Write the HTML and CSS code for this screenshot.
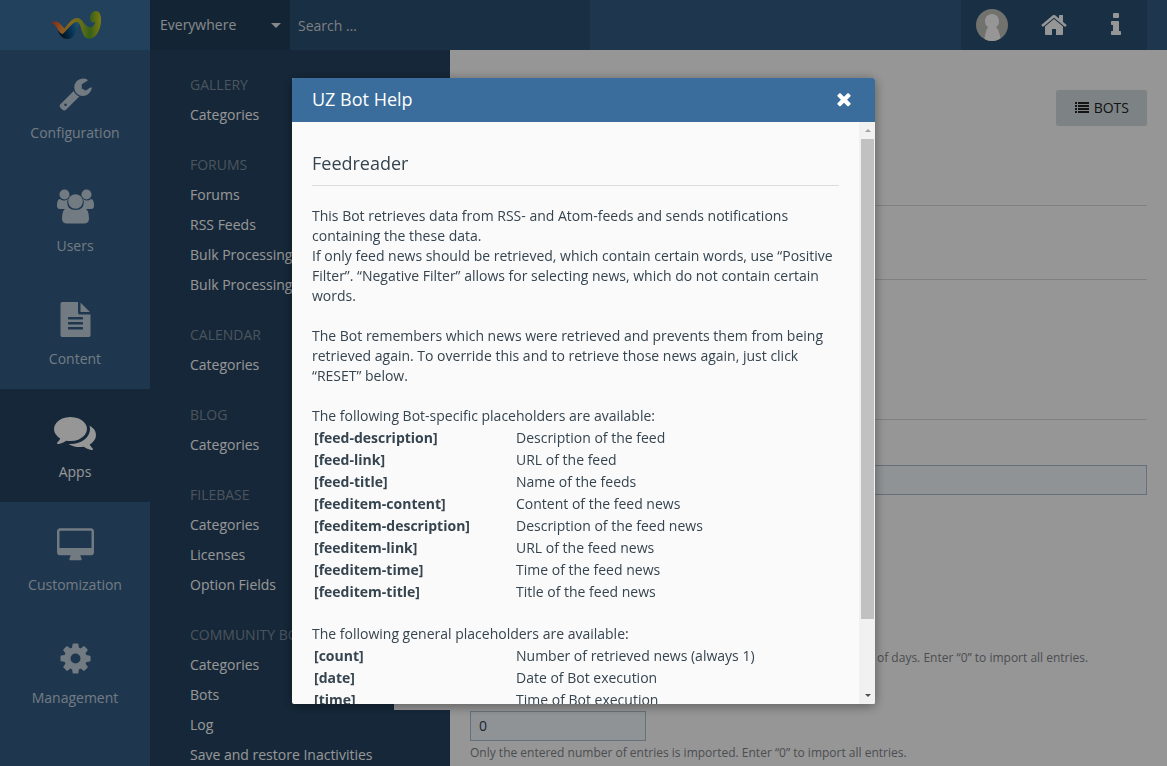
FILE: index.html
```html
<!DOCTYPE html>
<html lang="en">
<head>
<meta charset="utf-8">
<title>UZ Bot Help</title>
<link rel="stylesheet" href="styles.css">
</head>
<body>
<div class="page">
  <header class="topbar">
    <a class="logo" href="#" aria-label="Home">
      <svg width="52" height="30" viewBox="0 0 52 30">
        <defs>
          <linearGradient id="orange" x1="0" y1="0" x2="1" y2="0.3"><stop offset="0" stop-color="#e0401c"/><stop offset="0.5" stop-color="#e8702c"/><stop offset="1" stop-color="#e8a040"/></linearGradient>
          <linearGradient id="blue" x1="0" y1="0.3" x2="1" y2="0"><stop offset="0" stop-color="#06182a"/><stop offset="0.5" stop-color="#0c5a94"/><stop offset="1" stop-color="#4a9cc4"/></linearGradient>
          <linearGradient id="green" x1="0" y1="0.3" x2="1" y2="0.3"><stop offset="0" stop-color="#e09038"/><stop offset="0.25" stop-color="#d8b030"/><stop offset="0.5" stop-color="#a4b824"/><stop offset="0.72" stop-color="#58a02c"/><stop offset="1" stop-color="#d2ce18"/></linearGradient>
        </defs>
        <path fill="url(#blue)" d="M6 19C9 26 12 29 17 29C22 29 24 24 27 17C28 14 29 12 29 11L24 9C19 13 16 20 12 23C9 24 8 22 6 19Z"/>
        <path fill="url(#orange)" d="M0.500 12.500C4 10 9 12 12 17L15 20C14 22 12 24 11 24C7 22 6 15 0.500 12.500Z"/>
        <path fill="url(#green)" d="M13 19C18 13 21 8 26 8C32 8 33 16 38 17C41 18 44 15 44 12C39 14 38 8 40 4C42 0 48 0 49 4C51 9 50 18 46 24C43 29 37 30 34 27C30 23 30 12 26 12C21 12 17 20 11 24Z"/>
      </svg>
    </a>
    <form class="search">
      <button class="scope" type="button">Everywhere <span class="caret"></span></button>
      <input class="search-input" type="text" placeholder="Search …" aria-label="Search">
    </form>
    <nav class="user-panel" aria-label="User">
      <a class="panel-item" href="#" aria-label="Profile">
        <svg width="32" height="32" viewBox="0 0 32 32"><defs><clipPath id="round"><circle cx="16" cy="16" r="16"/></clipPath></defs><g clip-path="url(#round)"><path fill="#bdbcb8" d="M0 0h32v32H0z"/><path fill="#fafafa" d="M16 5c4 0 7 3 7 7 0 3-1 5-3 6 3 3 4 8 5 14H8c1-6 2-11 4-14-2-1-3-3-3-6 0-4 3-7 7-7z"/></g></svg>
      </a>
      <a class="panel-item" href="#" aria-label="Home page">
        <svg width="28" height="28" viewBox="0 0 1792 1792"><path d="M1472 992v480q0 26-19 45t-45 19h-384v-384h-256v384h-384q-26 0-45-19t-19-45v-480q0-1 .5-3t.5-3l575-474 575 474q1 2 1 6zm223-69l-62 74q-8 9-21 11h-3q-13 0-21-7l-692-577-692 577q-12 8-24 7-13-2-21-11l-62-74q-8-10-7-23.5t11-21.5l719-599q32-26 76-26t76 26l244 204v-195q0-14 9-23t23-9h192q14 0 23 9t9 23v408l219 182q10 8 11 21.5t-7 23.5z"/></svg>
      </a>
      <a class="panel-item" href="#" aria-label="Information">
        <svg width="28" height="28" viewBox="0 0 1792 1792"><path d="M1216 1344v128q0 26-19 45t-45 19h-512q-26 0-45-19t-19-45v-128q0-26 19-45t45-19h64v-384h-64q-26 0-45-19t-19-45v-128q0-26 19-45t45-19h384q26 0 45 19t19 45v576h64q26 0 45 19t19 45zm-128-1152v192q0 26-19 45t-45 19h-256q-26 0-45-19t-19-45v-192q0-26 19-45t45-19h256q26 0 45 19t19 45z"/></svg>
      </a>
    </nav>
  </header>

  <div class="columns">
    <nav class="main-menu" aria-label="Main">
      <a class="menu-item" href="#">
        <span class="menu-icon"><svg width="35" height="35" viewBox="0 0 1792 1792"><path d="M448 1472q0-26-19-45t-45-19-45 19-19 45 19 45 45 19 45-19 19-45zm644-420l-682 682q-37 37-90 37-52 0-91-37l-106-108q-38-36-38-90 0-53 38-91l681-681q39 98 114.500 173.500t173.500 114.500zm634-435q0 39-23 106-47 134-164.500 217.500t-258.500 83.500q-185 0-316.500-131.500t-131.500-316.500 131.500-316.500 316.500-131.500q58 0 121.500 16.500t107.500 46.500q16 11 16 28t-16 28l-293 169v224l193 107q5-3 79-48.500t135.500-81 70.500-35.500q15 0 23.500 10t8.500 25z"/></svg></span>
        Configuration</a>
      <a class="menu-item" href="#">
        <span class="menu-icon"><svg width="37" height="35" viewBox="0 0 37 35"><circle cx="7.500" cy="5.500" r="5"/><circle cx="29.500" cy="5.500" r="5"/><path d="M3 10q4 3 8 0q-2 6 2 10H3q-3 0-3-3q0-7 3-7zM34 10q-4 3-8 0q2 6-2 10h10q3 0 3-3q0-7-3-7z"/><g class="cutout"><circle cx="18.500" cy="12.500" r="8"/></g><circle cx="18.500" cy="12.500" r="7.300"/><path d="M11 18.500q7.500 5 15 0q6 1 6 11q0 5-5 5H10q-5 0-5-5q0-10 6-11z"/></svg></span>
        Users</a>
      <a class="menu-item" href="#">
        <span class="menu-icon"><svg width="35" height="35" viewBox="0 0 1792 1792"><path d="M1596 476q14 14 28 36h-472v-472q22 14 36 28zm-476 164h544v1056q0 40-28 68t-68 28h-1344q-40 0-68-28t-28-68v-1600q0-40 28-68t68-28h800v544q0 40 28 68t68 28zm160 736v-64q0-14-9-23t-23-9h-704q-14 0-23 9t-9 23v64q0 14 9 23t23 9h704q14 0 23-9t9-23zm0-256v-64q0-14-9-23t-23-9h-704q-14 0-23 9t-9 23v64q0 14 9 23t23 9h704q14 0 23-9t9-23zm0-256v-64q0-14-9-23t-23-9h-704q-14 0-23 9t-9 23v64q0 14 9 23t23 9h704q14 0 23-9t9-23z"/></svg></span>
        Content</a>
      <a class="menu-item active" href="#" aria-current="page">
        <span class="menu-icon"><svg width="42" height="42" viewBox="0 0 1792 1792"><path d="M1408 768q0 139-94 257t-256.500 186.500-353.500 68.500q-86 0-176-16-124 88-278 128-36 9-86 16h-3q-11 0-20.500-8t-11.500-21q-1-3-1-6.500t.5-6.500 2-6l2.500-5 3.500-5.500 4-5 4.500-5 4-4.500q5-6 23-25t26-29.500 22.500-29 25-38.500 20.500-44q-124-72-195-177t-71-224q0-139 94-257t256.500-186.500 353.500-68.500 353.500 68.500 256.500 186.500 94 257zm384 256q0 120-71 224.500t-195 176.500q10 24 20.500 44t25 38.500 22.500 29 26 29.500 23 25q1 1 4 4.500t4.500 5 4 5 3.500 5.500l2.500 5 2 6 .5 6.500-1 6.500q-3 14-13 22t-22 7q-50-7-86-16-154-40-278-128-90 16-176 16-271 0-472-132 58 4 88 4 161 0 309-45t264-129q125-92 192-212t67-254q0-77-23-152 129 71 204 178t75 230z"/></svg></span>
        Apps</a>
      <a class="menu-item" href="#">
        <span class="menu-icon"><svg width="37" height="35" viewBox="-64 0 1920 1792"><path d="M1728 992v-832q0-13-9.500-22.500t-22.500-9.500h-1600q-13 0-22.500 9.500t-9.500 22.500v832q0 13 9.500 22.500t22.500 9.500h1600q13 0 22.500-9.500t9.500-22.500zm128-832v1088q0 66-47 113t-113 47h-544q0 37 16 77.500t32 71 16 43.500q0 26-19 45t-45 19h-512q-26 0-45-19t-19-45q0-14 16-44t32-70 16-78h-544q-66 0-113-47t-47-113v-1088q0-66 47-113t113-47h1600q66 0 113 47t47 113z"/></svg></span>
        Customization</a>
      <a class="menu-item" href="#">
        <span class="menu-icon"><svg width="35" height="35" viewBox="0 0 1792 1792"><path d="M1152 896q0-106-75-181t-181-75-181 75-75 181 75 181 181 75 181-75 75-181zm512-109v222q0 12-8 23t-20 13l-185 28q-19 54-39 91 35 50 107 138 10 12 10 25t-9 23q-27 37-99 108t-94 71q-12 0-26-9l-138-108q-44 23-91 38-16 136-29 186-7 28-36 28h-222q-14 0-24.500-8.500t-11.500-21.500l-28-184q-49-16-90-37l-141 107q-10 9-25 9-14 0-25-11-126-114-165-168-7-10-7-23 0-12 8-23 15-21 51-66.500t54-70.500q-27-50-41-99l-183-27q-13-2-21-12.500t-8-23.500v-222q0-12 8-23t19-13l186-28q14-46 39-92-40-57-107-138-10-12-10-24 0-10 9-23 26-36 98.500-107.500t94.500-71.500q13 0 26 10l138 107q44-23 91-38 16-136 29-186 7-28 36-28h222q14 0 24.500 8.500t11.500 21.500l28 184q49 16 90 37l142-107q9-9 24-9 13 0 25 10 129 119 165 170 7 8 7 22 0 12-8 23-15 21-51 66.500t-54 70.500q26 50 41 98l183 28q13 2 21 12.500t8 23.500z"/></svg></span>
        Management</a>
    </nav>

    <nav class="sub-menu" aria-label="Apps">
      <section class="group"><h2 class="group-title">Gallery</h2><a class="sub-link" href="#">Categories</a></section>
      <section class="group"><h2 class="group-title">Forums</h2><a class="sub-link" href="#">Forums</a><a class="sub-link" href="#">RSS Feeds</a><a class="sub-link" href="#">Bulk Processing</a><a class="sub-link" href="#">Bulk Processing</a></section>
      <section class="group"><h2 class="group-title">Calendar</h2><a class="sub-link" href="#">Categories</a></section>
      <section class="group"><h2 class="group-title">Blog</h2><a class="sub-link" href="#">Categories</a></section>
      <section class="group"><h2 class="group-title">Filebase</h2><a class="sub-link" href="#">Categories</a><a class="sub-link" href="#">Licenses</a><a class="sub-link" href="#">Option Fields</a></section>
      <section class="group"><h2 class="group-title">Community Bot</h2><a class="sub-link" href="#">Categories</a><a class="sub-link" href="#">Bots</a><a class="sub-link" href="#">Log</a><a class="sub-link" href="#">Save and restore Inactivities</a></section>
      <span class="sub-menu-gap"></span>
    </nav>

    <main class="content">
      <div class="content-head">
        <a class="button" href="#"><svg width="14" height="12" viewBox="0 0 14 12"><path d="M0 0h2v2H0zM3 0h11v2H3zM0 3h2v2H0zM3 3h11v2H3zM0 6h2v2H0zM3 6h11v2H3zM0 9h2v2H0zM3 9h11v2H3z"/></svg>BOTS</a>
      </div>
      <hr class="rule rule-top">
      <hr class="rule rule-middle">
      <hr class="rule rule-bottom">
      <form class="settings">
        <input class="field" type="text" aria-label="Feed address">
        <p class="hint hint-days">of days. Enter “0” to import all entries.</p>
        <input class="field field-short" type="text" value="0" aria-label="Number of entries">
        <p class="hint">Only the entered number of entries is imported. Enter “0” to import all entries.</p>
      </form>
    </main>
  </div>
</div>

<div class="overlay">
  <section class="dialog" role="dialog" aria-modal="true" aria-labelledby="dialog-title">
    <header class="dialog-head">
      <h1 class="dialog-title" id="dialog-title">UZ Bot Help</h1>
      <button class="close" type="button" aria-label="Close"><svg width="20" height="20" viewBox="0 0 1792 1792"><path d="M1490 1322q0 40-28 68l-136 136q-28 28-68 28t-68-28l-294-294-294 294q-28 28-68 28t-68-28l-136-136q-28-28-28-68t28-68l294-294-294-294q-28-28-28-68t28-68l136-136q28-28 68-28t68 28l294 294 294-294q28-28 68-28t68 28l136 136q28 28 28 68t-28 68l-294 294 294 294q28 28 28 68z"/></svg></button>
    </header>
    <div class="dialog-body">
      <div class="dialog-content">
        <h2 class="section-title">Feedreader</h2>
        <p class="text">This Bot retrieves data from RSS- and Atom-feeds and sends notifications containing the these data.<br>If only feed news should be retrieved, which contain certain words, use “Positive Filter”. “Negative Filter” allows for selecting news, which do not contain certain words.</p>
        <p class="text">The Bot remembers which news were retrieved and prevents them from being retrieved again. To override this and to retrieve those news again, just click “RESET” below.</p>
        <p class="lead">The following Bot-specific placeholders are available:</p>
        <table class="placeholders">
          <tr><th scope="row">[feed-description]</th><td>Description of the feed</td></tr>
          <tr><th scope="row">[feed-link]</th><td>URL of the feed</td></tr>
          <tr><th scope="row">[feed-title]</th><td>Name of the feeds</td></tr>
          <tr><th scope="row">[feeditem-content]</th><td>Content of the feed news</td></tr>
          <tr><th scope="row">[feeditem-description]</th><td>Description of the feed news</td></tr>
          <tr><th scope="row">[feeditem-link]</th><td>URL of the feed news</td></tr>
          <tr><th scope="row">[feeditem-time]</th><td>Time of the feed news</td></tr>
          <tr><th scope="row">[feeditem-title]</th><td>Title of the feed news</td></tr>
        </table>
        <p class="lead">The following general placeholders are available:</p>
        <table class="placeholders">
          <tr><th scope="row">[count]</th><td>Number of retrieved news (always 1)</td></tr>
          <tr><th scope="row">[date]</th><td>Date of Bot execution</td></tr>
          <tr><th scope="row">[time]</th><td>Time of Bot execution</td></tr>
        </table>
      </div>
      <div class="scrollbar" aria-hidden="true">
        <span class="arrow arrow-up"></span>
        <span class="thumb"></span>
        <span class="arrow arrow-down"></span>
      </div>
    </div>
  </section>
</div>
</body>
</html>
```
FILE: styles.css
```css
* { box-sizing: border-box; }

body {
  margin: 0;
  background: #fafafa;
  color: #35444f;
  font: 14px/20px "Open Sans", "Noto Sans", sans-serif;
}

h1, h2, p { margin: 0; }
a { color: inherit; text-decoration: none; }
svg { display: block; fill: currentColor; }

.page {
  display: flex;
  flex-direction: column;
  height: 100vh;
  overflow: hidden;
}

/* Top bar */
.topbar {
  display: flex;
  flex: none;
  height: 50px;
  padding-right: 20px;
  background: #325c84;
}
.logo {
  display: flex;
  align-items: center;
  justify-content: center;
  width: 150px;
  padding-left: 3px;
  background: #3a6d9c;
}
.search { display: flex; width: 440px; }
.scope {
  display: flex;
  align-items: center;
  justify-content: space-between;
  width: 140px;
  padding: 0 9px 0 10px;
  border: 0;
  background: #213d57;
  color: #e0e4e8;
  font: inherit;
}
.caret {
  border: 5px solid transparent;
  border-top-color: currentColor;
  border-bottom: 0;
}
.search-input {
  flex: 1;
  min-width: 0;
  padding: 2px 8px 0;
  border: 0;
  background: #2b4f71;
  color: #fafafa;
  font: inherit;
}
.search-input::placeholder { color: #d0d4d8; opacity: 1; }
.user-panel {
  display: flex;
  margin-left: auto;
  background: #2b4f71;
  color: #fafafa;
}
.panel-item {
  display: flex;
  align-items: center;
  justify-content: center;
  width: 62px;
}

/* Menus */
.columns { display: flex; flex: 1; min-height: 0; }
.main-menu { width: 150px; background: #325c84; }
.menu-item {
  display: flex;
  flex-direction: column;
  align-items: center;
  gap: 9px;
  padding: 22px 0 20px;
  color: #c0cdd9;
}
.menu-item.active { background: #24425f; color: #fafafa; }
.menu-icon { display: flex; align-items: center; height: 42px; }
.cutout { fill: #325c84; }

.sub-menu {
  position: relative;
  width: 300px;
  padding: 20px 40px;
  overflow: hidden;
  background: #24425f;
}
.group { margin-bottom: 20px; }
.group-title {
  color: #7e8d9b;
  font-size: 14px;
  font-weight: 400;
  line-height: 30px;
  text-transform: uppercase;
}
.sub-link { display: block; color: #fafafa; line-height: 30px; }
.sub-menu-gap {
  position: absolute;
  right: 0;
  bottom: 56px;
  width: 56px;
  height: 20px;
  background: #fafafa;
}

/* Page content */
.content { flex: 1; padding: 40px 20px 0; }
.content-head { display: flex; justify-content: flex-end; }
.button {
  display: flex;
  align-items: center;
  gap: 5px;
  padding: 8px 18px 8px 19px;
  border-radius: 2px;
  background: #d0dade;
  color: #222;
}
.rule { height: 1px; margin: 0; border: 0; background: #d6d6d6; }
.rule-top { margin-top: 79px; }
.rule-middle { margin-top: 73px; }
.rule-bottom { margin-top: 139px; }
.settings { padding-top: 45px; }
.field {
  display: block;
  width: 100%;
  height: 30px;
  padding: 0 8px 2px;
  border: 1px solid #a9bdcd;
  background: #eff6fb;
  color: #2c3e50;
  font: inherit;
}
.field-short { width: 176px; margin-top: 43px; }
.hint { padding-top: 2px; color: #7d8287; font-size: 12px; }
.hint-days { margin-top: 151px; padding-left: 407px; }

/* Dialog */
.overlay {
  position: fixed;
  inset: 0;
  padding: 78px 20px 62px;
  background: rgba(0, 0, 0, .4);
}
.dialog {
  display: flex;
  flex-direction: column;
  max-width: 583px;
  height: 100%;
  margin: 0 auto;
  overflow: hidden;
  border-radius: 2px;
  background: #fafafa;
  box-shadow: 0 2px 12px rgba(0, 0, 0, .4);
}
.dialog-head {
  display: flex;
  flex: none;
  align-items: center;
  justify-content: space-between;
  height: 44px;
  padding: 0 21px 2px 20px;
  background: #3a6d9c;
  color: #fff;
}
.dialog-title { font-size: 18px; font-weight: 400; line-height: 24px; }
.close { padding: 0; border: 0; background: none; color: inherit; }
.dialog-body { display: flex; flex: 1; min-height: 0; }
.dialog-content { flex: 1; padding: 28px 20px 0; overflow: hidden; }
.section-title {
  margin-bottom: 20px;
  padding-bottom: 8px;
  border-bottom: 1px solid #dcdcdc;
  font-size: 18px;
  font-weight: 400;
  line-height: 27px;
}
.text { margin-bottom: 20px; }
.placeholders { margin-bottom: 20px; border-spacing: 2px; }
.placeholders th, .placeholders td { padding: 0; text-align: left; }
.placeholders th { width: 200px; font-weight: 700; }

.scrollbar {
  display: flex;
  flex-direction: column;
  align-items: center;
  width: 16px;
  padding: 0 1px 0 2px;
  background: #f1f1f1;
}
.arrow { flex: none; border: 3px solid transparent; }
.arrow-up { margin: 7px 0; border-top: 0; border-bottom-color: #a3a3a3; }
.thumb { width: 100%; height: 480px; background: #c1c1c1; }
.arrow-down { margin: auto 0 7px; border-bottom: 0; border-top-color: #505050; }
```
